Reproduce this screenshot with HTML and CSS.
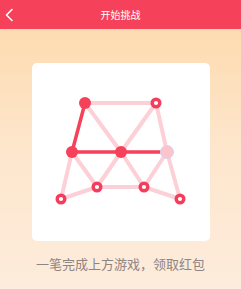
FILE: index.html
```html
<!DOCTYPE html>
<html lang="zh">
<head>
<meta charset="UTF-8">
<meta name="viewport" content="width=device-width, initial-scale=1.0">
<title>开始挑战</title>
<link rel="stylesheet" href="styles.css">
</head>
<body>
<div class="page">
    <div class="top-bar">
        <svg class="back" width="10" height="14" viewBox="0 0 10 14">
            <polyline points="8,1.5 2.5,7 8,12.5" fill="none" stroke="#ffffff" stroke-width="1.6" stroke-linecap="round" stroke-linejoin="round"/>
        </svg>
        <div class="title">开始挑战</div>
    </div>
    <div class="content">
        <div class="card">
            <svg class="puzzle" width="178" height="178" viewBox="0 0 178 178">
                <!-- faint edges -->
                <g stroke="#fcd0d6" stroke-width="4" stroke-linecap="round">
                    <line x1="53" y1="40" x2="124" y2="40"/>
                    <line x1="53" y1="40" x2="89" y2="89"/>
                    <line x1="124" y1="40" x2="89" y2="89"/>
                    <line x1="124" y1="40" x2="135" y2="89"/>
                    <line x1="40" y1="89" x2="65" y2="124"/>
                    <line x1="40" y1="89" x2="29" y2="136"/>
                    <line x1="89" y1="89" x2="65" y2="124"/>
                    <line x1="89" y1="89" x2="112" y2="124"/>
                    <line x1="135" y1="89" x2="112" y2="124"/>
                    <line x1="135" y1="89" x2="148" y2="136"/>
                    <line x1="65" y1="124" x2="112" y2="124"/>
                    <line x1="65" y1="124" x2="29" y2="136"/>
                    <line x1="112" y1="124" x2="148" y2="136"/>
                </g>
                <!-- drawn path -->
                <g stroke="#f5415a" stroke-width="3.5" stroke-linecap="round" fill="none">
                    <polyline points="53,40 40,89 89,89 131,89"/>
                </g>
                <!-- current point -->
                <circle cx="135" cy="89" r="6.5" fill="#fbc3cb" stroke="#d8d4ec" stroke-width="1"/>
                <!-- visited -->
                <g fill="#f5415a">
                    <circle cx="53" cy="40" r="6"/>
                    <circle cx="40" cy="89" r="6"/>
                    <circle cx="89" cy="89" r="6"/>
                </g>
                <!-- open points -->
                <g fill="#ffffff" stroke="#f23d5c" stroke-width="3.4">
                    <circle cx="124" cy="40" r="3.8"/>
                    <circle cx="65" cy="124" r="3.8"/>
                    <circle cx="112" cy="124" r="3.8"/>
                    <circle cx="29" cy="136" r="3.8"/>
                    <circle cx="148" cy="136" r="3.8"/>
                </g>
            </svg>
        </div>
        <p class="tip">一笔完成上方游戏，领取红包</p>
    </div>
</div>
</body>
</html>
```

FILE: styles.css
```css
body {
    margin: 0;
    font-family: "Noto Sans CJK SC", "Noto Sans", sans-serif;
}
.page {
    width: 241px;
    height: 289px;
    display: flex;
    flex-direction: column;
    overflow: hidden;
}
.top-bar {
    height: 29px;
    background-color: #f5415a;
    position: relative;
    display: flex;
    justify-content: center;
    align-items: center;
}
.back {
    position: absolute;
    left: 4px;
    top: 8px;
}
.title {
    color: #ffffff;
    font-size: 10px;
    letter-spacing: 0px;
}
.content {
    flex: 1;
    background: linear-gradient(#fddbb0, #fde6cc 45%, #fdecdc);
    display: flex;
    flex-direction: column;
    align-items: center;
    padding-top: 34px;
}
.card {
    width: 178px;
    height: 178px;
    background-color: #ffffff;
    border-radius: 5px;
}
.puzzle {
    display: block;
}
.tip {
    margin: 15px 0 0;
    font-size: 13px;
    color: #8d8484;
    line-height: 16px;
}
```
